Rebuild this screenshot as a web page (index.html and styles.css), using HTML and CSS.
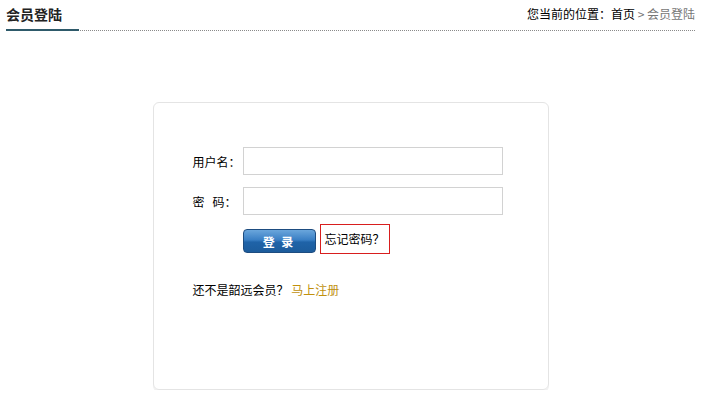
FILE: index.html
```html
<!DOCTYPE html>
<html lang="zh">
<head>
<meta charset="utf-8">
<title>会员登陆</title>
<link rel="stylesheet" href="styles.css">
</head>
<body>
<div class="header">
  <h2 class="title">会员登陆</h2>
  <div class="crumb"><span class="here">您当前的位置：首页</span> &gt; 会员登陆</div>
</div>
<div class="box">
  <form class="form">
    <div class="row">
      <label class="label">用户名：</label>
      <input class="input" type="text">
    </div>
    <div class="row">
      <label class="label">密&nbsp;&nbsp;&nbsp;码：</label>
      <input class="input" type="password">
    </div>
    <div class="row row-btn">
      <span class="label"></span>
      <button class="btn" type="button">登 录</button>
      <a class="forgot" href="#">忘记密码？</a>
    </div>
    <p class="reg">还不是韶远会员？ <a class="reg-link" href="#">马上注册</a></p>
  </form>
</div>
</body>
</html>
```
FILE: styles.css
```css
* { box-sizing: border-box; }
body {
  margin: 0;
  background: #fff;
  font-family: "Noto Sans CJK SC", "Liberation Sans", sans-serif;
  font-size: 12px;
  color: #000;
}
.header {
  margin: 0 6px;
  height: 31px;
  display: flex;
  justify-content: space-between;
  align-items: stretch;
  border-bottom: 1px dotted #8a8a8a;
}
.title {
  margin: 0 0 -1px 0;
  width: 73px;
  font-size: 14px;
  font-weight: bold;
  line-height: 28px;
  color: #222;
  border-bottom: 2px solid #2e5a6a;
}
.crumb {
  line-height: 28px;
  color: #777;
  padding-right: 0;
}
.here { color: #000; }
.box {
  width: 396px;
  height: 288px;
  margin: 71px auto 0;
  border: 1px solid #e4e4e4;
  border-radius: 6px;
  box-shadow: 0 2px 0 #f0f0f0;
}
.form {
  padding: 44px 0 0 39px;
  margin: 0;
}
.row {
  display: flex;
  align-items: center;
  margin-bottom: 12px;
}
.row-btn { margin-top: -3px; }
.label {
  width: 50px;
  text-align: left;
  white-space: pre;
}
.input {
  width: 260px;
  height: 28px;
  border: 1px solid #d2d2d2;
  margin: 0;
}
.btn {
  width: 73px;
  height: 24px;
  margin: 4px 0 0 0;
  padding: 0;
  border: 1px solid #1d4c80;
  border-radius: 4px;
  background: linear-gradient(#6aa6dc 0%, #3a7fc4 45%, #1f63a8 55%, #1c5c9c 100%);
  color: #fff;
  font-family: "Noto Sans CJK SC", sans-serif;
  font-size: 12px;
  font-weight: bold;
  letter-spacing: 2px;
}
.forgot {
  margin-left: 4px;
  height: 30px;
  width: 70px;
  border: 1px solid #d81e1e;
  padding-left: 4px;
  line-height: 28px;
  color: #000;
  text-decoration: none;
}
.reg {
  margin: 28px 0 0 0;
  line-height: 16px;
}
.reg-link {
  color: #c0900e;
  text-decoration: none;
}
```
